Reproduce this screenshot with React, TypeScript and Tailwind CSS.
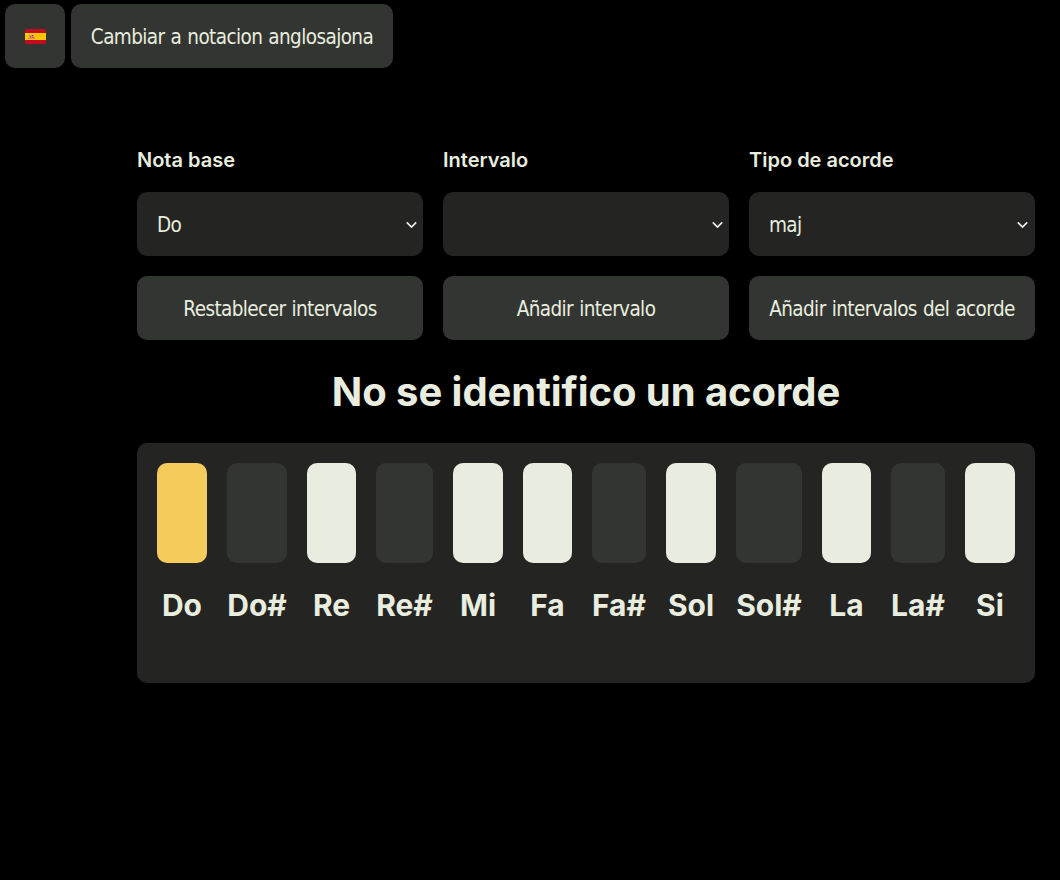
import React from "react";

const controlFont =
  "font-['DejaVu_Sans_Condensed','DejaVu_Sans',sans-serif] [font-stretch:condensed] text-[20.5px] tracking-[-0.6px] [word-spacing:0.8px]";

function Flag() {
  return (
    <svg width="21" height="15" viewBox="0 0 21 15" className="block" role="img">
      <clipPath id="flag-shape">
        <rect width="21" height="15" rx="2" />
      </clipPath>
      <g clipPath="url(#flag-shape)">
        <rect width="21" height="15" fill="#c60a1d" />
        <rect y="4" width="21" height="7" fill="#ffc400" />
        <path d="M4 6h5v4H4z" fill="#e58a6a" />
        <path d="M3 9h2v1H3zM9 9h1v1H9zM4 6h3v1H4z" fill="#b89a70" />
        <path d="M5 7h1v2H5zM7 8h2v1H7z" fill="#d8477a" />
        <path d="M7 6h1v1H7z" fill="#ad1519" />
      </g>
    </svg>
  );
}

function Button({ children }: { children: React.ReactNode }) {
  return (
    <button
      className={`flex h-16 items-center justify-center whitespace-nowrap rounded-[10px] bg-[#333533] pt-0.5 text-[#e8eddf] ${controlFont}`}
    >
      {children}
    </button>
  );
}

function Field({ label, value, inset = "pr-[5px]" }: { label: string; value: string; inset?: string }) {
  return (
    <div className="flex flex-col gap-5">
      <label className="h-6 text-xl font-semibold leading-6">{label}</label>
      <div
        role="combobox"
        className={`flex h-16 items-center justify-between rounded-[10px] bg-[#242423] pl-5 text-[#e8eddf] ${inset} ${controlFont}`}
      >
        <span className="pt-0.5">{value}</span>
        <svg width="13" height="8" viewBox="0 0 13 8" fill="none" className="mt-px">
          <path d="M1.8 1.3L6.5 6L11.2 1.3" stroke="#e8eddf" strokeWidth="1.7" />
        </svg>
      </div>
    </div>
  );
}

const notes = [
  { name: "Do", color: "bg-[#f5cb5c]" },
  { name: "Do#", color: "bg-[#333533]" },
  { name: "Re", color: "bg-[#e8eddf]" },
  { name: "Re#", color: "bg-[#333533]" },
  { name: "Mi", color: "bg-[#e8eddf]" },
  { name: "Fa", color: "bg-[#e8eddf]" },
  { name: "Fa#", color: "bg-[#333533]" },
  { name: "Sol", color: "bg-[#e8eddf]" },
  { name: "Sol#", color: "bg-[#333533]" },
  { name: "La", color: "bg-[#e8eddf]" },
  { name: "La#", color: "bg-[#333533]" },
  { name: "Si", color: "bg-[#e8eddf]" },
];

export default function App() {
  return (
    <div className="h-[880px] overflow-hidden bg-black font-['Inter',sans-serif] text-[#e8eddf]">
      <header className="flex gap-1.5 pl-[5px] pt-1">
        <button className="flex h-16 w-[60px] items-center justify-center rounded-[10px] bg-[#333533]">
          <Flag />
        </button>
        <div className="grid w-[322px]">
          <Button>Cambiar a notacion anglosajona</Button>
        </div>
      </header>
      <main className="ml-[137px] mt-20 w-[898px]">
        <div className="grid grid-cols-3 gap-5">
          <Field label="Nota base" value="Do" />
          <Field label="Intervalo" value="" />
          <Field label="Tipo de acorde" value="maj" inset="pr-1.5" />
          <Button>Restablecer intervalos</Button>
          <Button>Añadir intervalo</Button>
          <Button>Añadir intervalos del acorde</Button>
        </div>
        <h1 className="mt-7 h-12 text-center text-[40px] font-bold leading-[48px] tracking-[-0.06px]">
          No se identifico un acorde
        </h1>
        <section className="mt-[27px] grid h-60 grid-cols-[50px_60px_49px_57px_50px_49px_54px_50px_66px_49px_54px_50px] gap-5 rounded-[10px] bg-[#242423] p-5">
          {notes.map((note) => (
            <div key={note.name} className="flex flex-col items-center">
              <div className={`h-[100px] w-full rounded-[10px] ${note.color}`} />
              <span className="mt-6 whitespace-nowrap text-[30px] font-bold leading-9">{note.name}</span>
            </div>
          ))}
        </section>
      </main>
    </div>
  );
}
